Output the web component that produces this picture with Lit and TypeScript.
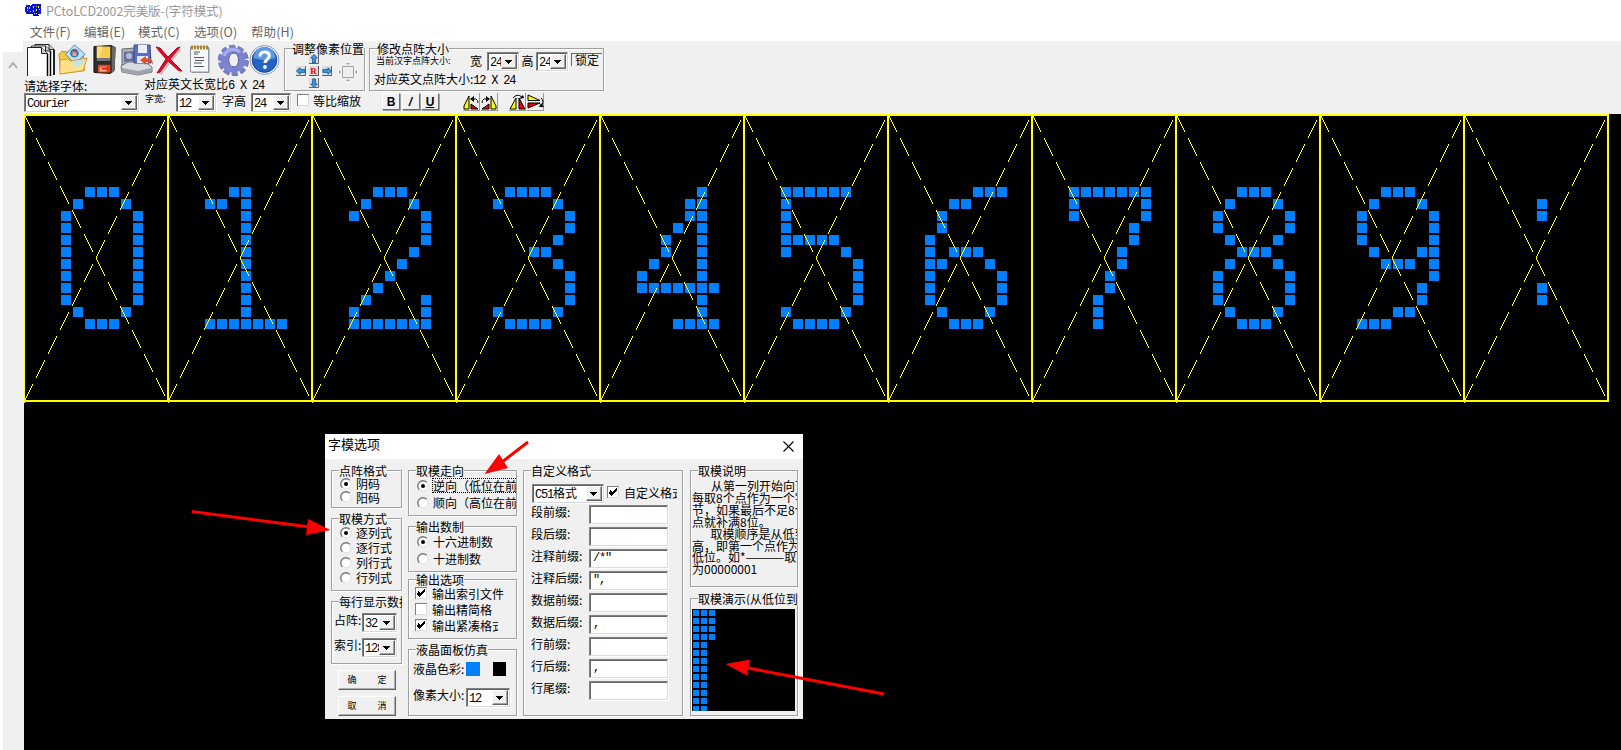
import { LitElement, html, css, svg, nothing } from "lit";
import { customElement, property } from "lit/decorators.js";
import { classMap } from "lit/directives/class-map.js";

const O = "#.....#";
const V = "......#";
const GLYPHS: string[][] = [
  ["..###..", ".#...#.", O, O, O, O, O, O, O, O, ".#...#.", "..###.."],
  ["..##...", "##.#...", "...#...", "...#...", "...#...", "...#...", "...#...", "...#...", "...#...", "...#...", "...#...", "#######"],
  ["..###..", ".#...#.", O, V, V, ".....#.", "....#..", "...#...", "..#....", ".#....#", O, "#######"],
  [".####..", "#....#.", V, V, ".....#.", "...##..", ".....#.", V, V, V, "#....#.", ".####.."],
  [".....#.", "....##.", "....##.", "...#.#.", "..#..#.", "..#..#.", ".#...#.", "#....#.", "#######", ".....#.", ".....#.", "...####"],
  ["######.", "#......", "#......", "#......", "#####..", "#....#.", V, V, V, V, "#....#.", ".####.."],
  ["....###", "..##...", ".#.....", ".#.....", "#......", "#.###..", "##...#.", O, O, O, ".#...#.", "..###.."],
  ["#######", O, O, ".....#.", ".....#.", "....#..", "....#..", "...#...", "...#...", "..#....", "..#....", "..#...."],
  ["..###..", ".#...#.", O, O, ".#...#.", "..###..", ".#...#.", O, O, O, ".#...#.", "..###.."],
  ["..###..", ".#...#.", O, O, O, ".#...##", "..###.#", V, ".....#.", ".....#.", "...##..", "###...."],
  ["", "...#...", "...#...", "", "", "", "", "", "...#...", "...#...", "", ""],
];

/** Dashed diagonals: 9 steps of 1x2 pixels drawn, 3 skipped. */
const DIAGONALS = (() => {
  let d = "";
  for (let j = 0; j < 144; j++) {
    if (j % 12 > 8) continue;
    d += `M${j} ${2 * j}h1v2h-1z`;
    d += `M${j} ${286 - 2 * j}h1v2h-1z`;
  }
  return d;
})();

@customElement("dot-cell")
class DotCell extends LitElement {
  @property({ attribute: false }) rows: string[] = [];
  static styles = css`
    :host { display: block; width: 144px; height: 288px; flex: none; }
    svg { display: block; overflow: visible; shape-rendering: crispEdges; }
    .dot { fill: #0080ff; }
    .line { fill: #ffff00; }
  `;
  render() {
    let d = "";
    this.rows.forEach((r, y) =>
      [...r].forEach((c, x) => {
        if (c === "#") d += `M${37 + 12 * x} ${73 + 12 * y}h10v10h-10z`;
      })
    );
    return html`<svg width="144" height="288" viewBox="0 0 144 288">
      <path class="dot" d=${d}></path>
      <path class="line" d=${DIAGONALS}></path>
      <path class="line" d="M0 0h145v2h-145zM0 286h145v2h-145zM0 0h1v289h-1zM143 0h2v288h-2z"></path>
    </svg>`;
  }
}

@customElement("drop-box")
class DropBox extends LitElement {
  @property() value = "";
  static styles = css`
    :host {
      display: flex; box-sizing: border-box; height: 19px; flex: none; background: #fff;
      border: 1px solid; border-color: #808080 #d8d8d8 #d8d8d8 #808080;
      box-shadow: inset 1px 1px #606060, 1px 1px #fff;
      padding: 2px 1px 0 1px; overflow: hidden;
    }
    .text {
      flex: 1; min-width: 0; overflow: hidden; white-space: pre; color: #000; line-height: 12px; height: 14px; margin-left: 1px;
      font-family: "Noto Sans CJK SC", sans-serif; font-size: 12px;
    }
    .latin { font-family: "Liberation Mono", monospace; letter-spacing: -1.2px; }
    .btn {
      width: 16px; height: 15px; margin-top: -1px; flex: none; box-sizing: border-box; background: #f0f0f0;
      border: 1px solid; border-color: #fff #606060 #606060 #fff; box-shadow: inset -1px -1px #a0a0a0;
    }
    svg { display: block; margin: 5px 0 0 3px; }
  `;
  render() {
    const m = /^([\x20-\x7e]*)(.*)$/.exec(this.value)!;
    return html`<span class="text"><span class="latin">${m[1]}</span>${m[2]}</span>
      <span class="btn"><svg width="7" height="4"><path shape-rendering="crispEdges" d="M0 0h7v1h-7zM1 1h5v1h-5zM2 2h3v1h-3zM3 3h1v1h-1z"/></svg></span>`;
  }
}

@customElement("group-box")
class GroupBox extends LitElement {
  @property() label = "";
  static styles = css`
    :host {
      display: flex; flex-direction: column; box-sizing: border-box; flex: none;
      border: 1px solid #a0a0a0; box-shadow: 1px 1px #fff, inset 1px 1px #fff;
      font-size: 12px; line-height: 12px; color: #000;
    }
    .legend {
      align-self: flex-start; margin: -7px 0 0 7px; height: 13px; line-height: 13px;
      background: #f0f0f0; white-space: nowrap; flex: none; max-width: calc(100% - 6px); overflow: hidden;
    }
    .body { margin-top: -1px; display: flex; flex-direction: column; min-width: 0; }
  `;
  render() {
    return html`<div class="legend">${this.label}</div><div class="body"><slot></slot></div>`;
  }
}

const radio = (text: string, on = false, focus = false) => html`<div class="opt">
  <svg class="mark" width="12" height="12" viewBox="0 0 12 12">
    <circle cx="6" cy="6" r="5" fill="#fff" stroke="#e0e0e0"/>
    <path d="M2.3 9.7A5.2 5.2 0 0 1 9.7 2.3" fill="none" stroke="#777" stroke-width="1.3"/>
    ${on ? svg`<circle cx="6" cy="6" r="2" fill="#000"/>` : nothing}
  </svg><span class=${classMap({ cap: true, focus })}>${text}</span></div>`;

const check = (text: string, on = false) => html`<div class="opt">
  <svg class="mark" width="12" height="12" viewBox="0 0 12 12" shape-rendering="crispEdges">
    <path fill="#fff" d="M0 0h12v12H0z"/><path fill="#808080" d="M0 0h12v1H1v11H0z"/><path fill="#dcdcdc" d="M11 1h1v11H1v-1h10z"/>
    ${on ? svg`<path d="M3 4h1v1h1v1h1v-1h1v-1h1v-1h1v-1h1v3h-1v1h-1v1h-1v1h-1v1h-1v1h-1v-1h-1v-1h-1z"/>` : nothing}
  </svg><span class="cap">${text}</span></div>`;

const icons = {
  logo: svg`<svg width="17" height="15" viewBox="0 0 17 15"><g shape-rendering="crispEdges"><path fill="#0818c8" d="M1 2h4v1h2V1h9v10h-3v2H8v-2H1V9H0V4h1z"/><path fill="#ffe020" d="M2 4h1v2H2zM4 4h1v2H4zM6 5h1v1H6zM8 3h1v2H8zM11 3h1v1h-1zM13 3h1v2h-1zM2 7h1v1H2zM5 8h1v1H5zM8 7h1v2H8zM11 6h1v2h-1zM14 6h1v1h-1zM9 10h1v1H9zM11 10h1v1h-1z"/><path fill="#101040" d="M6 2h1v9H6zM12 2h1v10h-1zM8 12h6v1H8z"/></g></svg>`,
  copy: svg`<svg width="30" height="32" viewBox="0 0 30 32"><g fill="#fff" stroke="#222"><path d="M8 30V.5h14l5 5V31"/><path d="M4.500 31V2h14l5 5v24"/><path d="M.5 32V3.500h14l6 6V32"/></g><path d="M14.500 3.500v6h6M18.500 2v5h5M22 .5v5h5" fill="#ccc" stroke="#222"/><path d="M20.500 10v22M23.500 7v25M27 6v25" stroke="#000" stroke-width="1.500"/></svg>`,
  open: svg`<svg width="32" height="32" viewBox="0 0 33 32"><path d="M2 10l3-3 7 1 2 3h13l1 4v12L4 30z" fill="#f5c84a" stroke="#b88a25"/><path d="M18 .5l11 9.500-11 10-9-10z" fill="#c3e4f2" stroke="#4e86a8"/><circle cx="18" cy="9" r="4.500" fill="#2f79b8"/><path d="M16 7h4v5h-4z" fill="#f2a08a"/><path d="M17 6h3v2h-3z" fill="#d33"/><path d="M3 30.500V16l8-1 3 2 17-3-4 13z" fill="#ffe08a" stroke="#c9992f"/><path d="M15 17l14-1-8 8z" fill="#b9e3f7"/></svg>`,
  floppy: svg`<svg width="24" height="31" viewBox="0 0 25 31"><path d="M1 2l18-1 4 2-1 24-4 3-17-1z" fill="#2b2b2b" stroke="#111"/><path d="M19.500 1.500l4 1.500-1 24-3 2.500z" fill="#6c6862"/><path d="M4 2h14v12H4z" fill="#f7ca52"/><path d="M4 2h6l-3 12H4z" fill="#fbdc80"/><path d="M4 14h14v3H4z" fill="#777"/><path d="M5 21h13v8H5z" fill="#e3401b"/><path d="M7 23h7v5H7z" fill="#ffb089"/><path d="M9 24h7v2H9z" fill="#c21"/></svg>`,
  save: svg`<svg width="34" height="32" viewBox="0 0 34 32"><path d="M2 5l13-1 5 3v13L2 21z" fill="#aeb2be" stroke="#667"/><path d="M4 8l10-1v10L4 18z" fill="#62719c"/><circle cx="9" cy="12" r="3" fill="#aeb9d9"/><path d="M1 22l7-4h17l7 5v5l-14 3L2 28z" fill="#dadbe0" stroke="#6d7078"/><path d="M2 24l16 3 13-3v4l-13 3-16-3z" fill="#a2a4ab"/><path d="M14 1h16l1 18H14z" fill="#5a6fc4" stroke="#3b4684"/><path d="M18 1h9v8h-9z" fill="#eef"/><path d="M17 12h11v7H17z" fill="#e5e8f5"/><path d="M20 16l6-4v2.500h2c4 0 5 3 5 6.500-1-3-3-3-7-3v3z" fill="#ee4a22"/></svg>`,
  cross: svg`<svg width="28" height="30" viewBox="0 0 28 30"><path d="M3 4L26 27M25 4L5 29" stroke="#c4bcbc" stroke-width="3"/><path d="M1 2l4 1 8 9 9-9 3-1-10 12 12 12-4-1-10-9-8 11-3 1 9-14z" fill="#d8102c" stroke="#c0001c"/></svg>`,
  notes: svg`<svg width="22" height="30" viewBox="0 0 22 30"><path d="M3 4h17.500v25H3z" fill="#999"/><path d="M1.500 3h18v25h-18z" fill="#f7f8fa" stroke="#8e959d"/><path d="M2 3.500h18" stroke="#a88626" stroke-width="4" stroke-dasharray="2 1"/><path d="M5 8h6M5 10h4M5 13.500h10M6 16.500h9M5 19h8M5 22.500h10" stroke="#505860"/></svg>`,
  gear: svg`<svg width="32" height="32" viewBox="-16 -16 32 32"><circle r="12.200" fill="none" stroke="#777" stroke-width="6" stroke-dasharray="5 2.665" transform="translate(.8 1)"/><circle r="12" fill="none" stroke="#7a80d0" stroke-width="6.500" stroke-dasharray="5 2.540"/><path fill-rule="evenodd" fill="#7c84d2" d="M0-12.500A12.500 12.500 0 0 1 0 12.500A12.500 12.500 0 0 1 0-12.500zM1-7C-6-7-6 7 1 7C7 7 7-7 1-7z"/><path d="M-9-4A10 10 0 0 1 7-8" fill="none" stroke="#a9b0ee" stroke-width="3"/><path d="M1-7C-6-7-6 7 1 7C7 7 7-7 1-7z" fill="#f0f0f0" stroke="#555a9c"/></svg>`,
  help: svg`<svg width="31" height="32" viewBox="0 0 31 32"><circle cx="15.500" cy="16" r="14.500" fill="#e8edf5" stroke="#8da0bd"/><circle cx="15.500" cy="16" r="12.300" fill="#2463c4" stroke="#164390"/><path d="M4.500 14a11 11 0 0 1 22 0q-11 4-22 0z" fill="#5e98e4"/><path d="M11 12.500q0-4.500 4.600-4.500t4.700 4c0 3.500-4.300 3.500-4.300 7" fill="none" stroke="#fff" stroke-width="3"/><circle cx="16" cy="23" r="1.900" fill="#fff"/></svg>`,
};

const arrow = (deg: number) => html`<svg class="arrow" width="10" height="10" viewBox="0 0 11 11"><path d="M0 0h11v11H0z" fill="#dcdcdc"/><path d="M10.500 0v10.500H0" fill="none" stroke="#555"/><g transform="rotate(${deg} 5.500 5.500)"><path d="M5.500 .5l3.500 4H7V10H4V4.500H2z" fill="#3aa0ee" stroke="#0e4796" stroke-width=".9"/></g></svg>`;

const flip = (kind: number) => {
  const art = [
    svg`<path d="M1 16V13L6 3v13z" fill="#ff0" stroke="#000"/><path d="M8 16v-5l7 5z" fill="#e00" stroke="#000"/><path d="M9 6h4q2 1 2 4" fill="none" stroke="#000"/><path d="M7 6l4-3v6z"/>`,
    svg`<path d="M10 16V3l5 10v3z" fill="#ff0" stroke="#000"/><path d="M1 16l7-5v5z" fill="#e00" stroke="#000"/><path d="M1 10q0-3 2-4h4" fill="none" stroke="#000"/><path d="M9 6L5 3v6z"/>`,
    svg`<path d="M1 16L7 5v11z" fill="#ff0" stroke="#000"/><path d="M10 16V5l6 11z" fill="#e00" stroke="#000"/><path d="M4 5q4-5 9-1" fill="none" stroke="#000"/><path d="M15 5l-5 1 4-4z"/>`,
    svg`<path d="M1 2l12 5.500H1z" fill="#ff0" stroke="#000"/><path d="M1 10h12L1 15z" fill="#e00" stroke="#000"/><path d="M14 5q4 4 0 8" fill="none" stroke="#000"/><path d="M12 14h5l-3-4z"/>`,
  ];
  return html`<span class="flip"><svg width="17" height="17" viewBox="0 0 17 17">${art[kind]}</svg></span>`;
};

const FIELDS: [string, string][] = [
  ["段前缀:", ""], ["段后缀:", ""], ["注释前缀:", '/*"'], ["注释后缀:", '",'], ["数据前缀:", ""],
  ["数据后缀:", ","], ["行前缀:", ""], ["行后缀:", ","], ["行尾缀:", ""],
];

@customElement("app-root")
class AppRoot extends LitElement {
  static styles = css`
    :host {
      display: flex; flex-direction: column; position: relative; width: 1621px; height: 750px; overflow: hidden;
      background: #fff; font-family: "Noto Sans CJK SC", sans-serif; font-size: 12px; line-height: 12px; color: #000;
    }
    svg { display: block; flex: none; }
    .title { display: flex; height: 22px; flex: none; padding: 3px 0 0 25px; box-sizing: border-box; color: #999; }
    .title span { margin: 2px 0 0 4px; font-size: 12.5px; letter-spacing: -0.1px; }
    .menu { display: grid; grid-template-columns: 54px 54px 56px 57px 60px; height: 19px; flex: none; padding: 4px 0 0 30px; box-sizing: border-box; color: #666; font-size: 12.5px; }
    .menu span { white-space: nowrap; letter-spacing: .1px; }
    .main { display: flex; flex: 1; min-height: 0; }
    .side { width: 20px; margin: 11px 0 0 3px; background: #f0f0f0; flex: none; padding: 9px 0 0 5px; box-sizing: border-box; }
    .work { flex: 1; min-width: 0; display: flex; flex-direction: column; background: #f0f0f0; padding-left: 1px; }
    .tools { height: 73px; flex: none; display: flex; flex-direction: column; }
    .upper { display: flex; height: 51px; flex: none; }
    .left { width: 260px; flex: none; }
    .icons { display: flex; align-items: flex-start; height: 37px; padding: 3px 0 0 3px; box-sizing: border-box; }
    .i-floppy { margin-left: 4px; } .i-save { margin-left: 3px; } .i-cross { margin: 1px 0 0 1px; }
    .i-notes { margin-left: 6px; } .i-gear { margin-left: 6px; }
    .labels { display: flex; height: 14px; white-space: pre; }
    .labels .l1 { width: 120px; padding-top: 2px; } .labels .l2 { height: 12px; }
    .mono { font-family: "Liberation Mono", monospace; font-size: 12px; letter-spacing: -1.2px; white-space: pre; }
    .row3 { display: flex; height: 20px; align-items: flex-start; white-space: nowrap; margin-top: 1px; }
    .tiny { font-size: 9px; line-height: 10px; white-space: pre; }
    .row3 .tiny { padding-top: 1px; }
    .t { padding-top: 2px; }
    .pos { width: 81px; height: 43px; margin-top: 7px; }
    .posbody { display: flex; margin: 0 0 0 11px; }
    .pad { display: grid; grid-template-columns: repeat(3, 10px); grid-template-rows: repeat(3, 10px); column-gap: 3px; row-gap: 2px; }
    .reset { background: #ddd; color: #e00; font: bold 9px/10px "Liberation Serif", serif; text-align: center; border-right: 1px solid #555; border-bottom: 1px solid #555; box-sizing: border-box; height: 10px; }
    .target { margin: 8px 0 0 6px; }
    .size { width: 235px; height: 43px; margin: 7px 0 0 4px; }
    .sizerow { display: flex; height: 18px; margin-top: -2px; }
    .sizerow .tiny { width: 94px; padding: 4px 0 0 6px; }
    .sizerow .cn { padding-top: 3px; width: 17px; }
    .lock { width: 31px; height: 13px; margin: 1px 0 0 3px; border-top: 1px solid #666; border-left: 1px solid #666; text-align: center; line-height: 12px; box-sizing: border-box; }
    .eng { padding: 3px 0 0 4px; white-space: nowrap; }
    .biu { display: flex; }
    .biu span { width: 18px; height: 17px; box-sizing: border-box; border: 1px solid; border-color: #fff #707070 #707070 #fff; box-shadow: 1px 1px #a0a0a0; margin-right: 1.5px; text-align: center; font: bold 12px/16px "Liberation Sans", sans-serif; }
    .biu .ital { font-style: italic; } .biu .under { text-decoration: underline; }
    .flip { width: 17px; height: 18px; margin-right: 1px; border-right: 1px solid #999; border-bottom: 1px solid #999; box-sizing: border-box; flex: none; }
    .canvas { flex: 1; background: #000; display: flex; align-items: flex-start; min-height: 0; }

    .opt { display: flex; align-items: center; height: 14px; white-space: nowrap; overflow: hidden; }
    .mark { margin-right: 4px; }
    .cap { line-height: 13px; height: 13px; }
    .focus { outline: 1px dotted #000; outline-offset: 0; }

    .dialog { position: absolute; left: 325px; top: 434px; width: 478px; height: 285px; background: #f0f0f0; display: flex; flex-direction: column; }
    .dtitle { height: 25px; flex: none; background: #fff; display: flex; justify-content: space-between; padding: 3px 9px 0 3px; box-sizing: border-box; font-size: 13px; line-height: 13px; }
    .dtitle svg { margin-top: 4px; }
    .dbody { display: flex; padding: 11px 0 0 6px; }
    .col { display: flex; flex-direction: column; flex: none; }
    .c1 { width: 71px; } .c2 { width: 109px; margin-left: 6px; } .c3 { margin-left: 6px; } .c4 { margin-left: 7px; }
    .g1 { height: 38px; } .g1 .opt { height: 13.5px; margin-left: 8px; }
    .g2 { height: 73px; margin-top: 10px; } .g2 .opt { height: 15px; margin-left: 8px; }
    .g1 .opt:first-of-type { margin-top: 1px; } .g2 .opt:first-of-type { margin-top: 1px; }
    .g3 { height: 63px; margin-top: 10px; }
    .pair { display: flex; height: 19px; } .pair .cn { padding-top: 1px; white-space: nowrap; flex: none; }
    .g3 .pair { margin: 5px 0 1px 2px; } .g3 .cn { width: 28px; }
    .g3 .pair:first-of-type { margin-top: 6px; }
    .push { width: 58px; height: 20px; margin: 6px 0 0 7px; box-sizing: border-box; border: 1px solid; border-color: #fff #606060 #606060 #fff; box-shadow: inset -1px -1px #b0b0b0; text-align: center; font-size: 9px; line-height: 18px; white-space: pre; word-spacing: 1px; }
    .g4 { height: 46px; } .g4 .opt { height: 17px; margin: 0 0 0 8px; } .g4 .opt:first-of-type { margin-top: 1px; }
    .g5 { height: 46px; margin-top: 10px; } .g5 .opt { height: 17px; margin-left: 8px; } .g5 .opt:first-of-type { margin-top: 1px; }
    .g6 { height: 60px; margin-top: 7px; } .g6 .opt { height: 16px; margin-left: 6px; width: 83px; } .g6 .opt:first-of-type { width: 100px; }
    .g6 .mark { margin-right: 5px; }
    .g7 { height: 67px; margin-top: 10px; } .g7 .pair { margin: 7px 0 0 4px; } .g7 .cn { width: 53px; }
    .swatch { width: 14px; height: 14px; background: #0080ff; } .swatch.off { background: #000; margin-left: 13px; width: 13px; }
    .g4 .mark, .g5 .mark { margin-right: 4px; }
    .g8 { width: 160px; height: 246px; }
    .fmt { display: flex; margin: 8px 0 0 8px; height: 21px; }
    .fmt .opt { margin: 1px 0 0 3px; width: 70px; } .fmt .mark { margin-right: 5px; }
    .fields { display: flex; flex-direction: column; gap: 2.8px; padding: 0 0 0 7px; }
    .field { display: flex; height: 19.2px; }
    .field label { width: 58px; padding-top: 1.4px; white-space: nowrap; }
    .entry { width: 79px; height: 19px; box-sizing: border-box; background: #fff; border: 1px solid; border-color: #808080 #dadada #dadada #808080; box-shadow: inset 1px 1px #686868, 1px 1px #fff; padding: 2px 0 0 3px; }
    .g9 { width: 108px; height: 117px; }
    .help { margin: 4px 0 0 1px; white-space: pre; overflow: hidden; line-height: 11.9px; }
    .para { padding-left: 18.5px; } .para.first { padding-left: 19px; }
    .dash { letter-spacing: -1.5px; margin-right: 1.5px; }
    .g10 { width: 108px; height: 118px; margin-top: 11px; }
    .demo { width: 103px; height: 102px; background: #000; margin: 5px 0 0 1px; overflow: hidden; }
    .marks { position: absolute; left: 0; top: 0; pointer-events: none; }
  `;

  render() {
    let demo = "";
    for (let r = 0; r < 13; r++) for (let c = 0; c < (r < 4 ? 3 : 2); c++) demo += `M${1 + 8 * c} ${1 + 8 * r}h6v6h-6z`;
    return html`
      <div class="title">${icons.logo}<span>PCtoLCD2002完美版-(字符模式)</span></div>
      <div class="menu"><span>文件(F)</span><span>编辑(E)</span><span>模式(C)</span><span>选项(O)</span><span>帮助(H)</span></div>
      <div class="main">
        <div class="side"><svg width="10" height="8"><path d="M1 7l4-5 4 5" fill="none" stroke="#aaa" stroke-width="1.800"/></svg></div>
        <div class="work">
          <div class="tools">
            <div class="upper">
              <div class="left">
                <div class="icons">
                  <span>${icons.copy}</span><span>${icons.open}</span><span class="i-floppy">${icons.floppy}</span><span class="i-save">${icons.save}</span>
                  <span class="i-cross">${icons.cross}</span><span class="i-notes">${icons.notes}</span><span class="i-gear">${icons.gear}</span><span>${icons.help}</span>
                </div>
                <div class="labels"><span class="l1">请选择字体:</span><span class="l2">对应英文长宽比<span class="mono">6 X 24</span></span></div>
              </div>
              <group-box class="pos" label="调整像素位置">
                <div class="posbody">
                  <div class="pad">
                    <span></span>${arrow(0)}<span></span>
                    ${arrow(270)}<span class="reset">R</span>${arrow(90)}
                    <span></span>${arrow(180)}<span></span>
                  </div>
                  <svg class="target" width="20" height="20" viewBox="0 0 20 20"><path d="M4.500 4.500h11v11h-11z" fill="none" stroke="#a0a0a0"/><path d="M8 1h4l-2 2zM8 19h4l-2-2zM1 8v4l2-2zM19 8v4l-2-2z" fill="#a0a0a0"/></svg>
                </div>
              </group-box>
              <group-box class="size" label="修改点阵大小">
                <div class="sizerow">
                  <span class="tiny">当前汉字点阵大小:</span>
                  <span class="cn">宽</span><drop-box style="width:32px" value="24"></drop-box>
                  <span class="cn">&thinsp;高</span><drop-box style="width:32px" value="24"></drop-box>
                  <span class="lock">锁定</span>
                </div>
                <div class="eng">对应英文点阵大小:<span class="mono">12 X 24</span></div>
              </group-box>
            </div>
            <div class="row3">
              <drop-box style="width:115px" value="Courier"></drop-box>
              <span class="tiny" style="width:37px;text-indent:6px">字宽:</span>
              <drop-box style="width:40px" value="12"></drop-box>
              <span class="t" style="width:35px;text-indent:6px">字高</span>
              <drop-box style="width:40px" value="24"></drop-box>
              <span style="width:91px;padding-left:6px;box-sizing:border-box">${check("等比缩放")}</span>
              <span class="biu"><span>B</span><span class="ital">/</span><span class="under">U</span></span>
              <span style="width:22px"></span>${flip(0)}${flip(1)}<span style="width:10px"></span>${flip(2)}${flip(3)}
            </div>
          </div>
          <div class="canvas">${GLYPHS.map((g) => html`<dot-cell .rows=${g}></dot-cell>`)}</div>
        </div>
      </div>

      <div class="dialog">
        <div class="dtitle"><span>字模选项</span><svg width="11" height="11"><path d="M.5 .5l10 10M10.500 .5l-10 10" stroke="#000" stroke-width="1.100"/></svg></div>
        <div class="dbody">
          <div class="col c1">
            <group-box class="g1" label="点阵格式">${radio("阴码", true)}${radio("阳码")}</group-box>
            <group-box class="g2" label="取模方式">${radio("逐列式", true)}${radio("逐行式")}${radio("列行式")}${radio("行列式")}</group-box>
            <group-box class="g3" label="每行显示数据">
              <div class="pair"><span class="cn">占阵:</span><drop-box style="width:35px" value="32"></drop-box></div>
              <div class="pair"><span class="cn">索引:</span><drop-box style="width:35px" value="128"></drop-box></div>
            </group-box>
            <div class="push">确       定</div>
            <div class="push">取       消</div>
          </div>
          <div class="col c2">
            <group-box class="g4" label="取模走向">${radio("逆向（低位在前）", true, true)}${radio("顺向（高位在前）")}</group-box>
            <group-box class="g5" label="输出数制">${radio("十六进制数", true)}${radio("十进制数")}</group-box>
            <group-box class="g6" label="输出选项">${check("输出索引文件", true)}${check("输出精简格")}${check("输出紧凑格式", true)}</group-box>
            <group-box class="g7" label="液晶面板仿真">
              <div class="pair"><span class="cn">液晶色彩:</span><span class="swatch"></span><span class="swatch off"></span></div>
              <div class="pair"><span class="cn">像素大小:</span><drop-box style="width:44px" value="12"></drop-box></div>
            </group-box>
          </div>
          <div class="col c3">
            <group-box class="g8" label="自定义格式">
              <div class="fmt"><drop-box style="width:72px" value="C51格式"></drop-box>${check("自定义格式", true)}</div>
              <div class="fields">${FIELDS.map(([l, v]) => html`<div class="field"><label>${l}</label><span class="entry mono">${v}</span></div>`)}</div>
            </group-box>
          </div>
          <div class="col c4">
            <group-box class="g9" label="取模说明">
              <div class="help"><div class="para first">从第一列开始向下</div><div>每取8个点作为一个字</div><div>节，如果最后不足8个</div><div>点就补满8位。</div><div class="para">取模顺序是从低到</div><div>高，即第一个点作为最</div><div>低位。如*<span class="dash">————</span>取</div><div>为00000001</div></div>
            </group-box>
            <group-box class="g10" label="取模演示(从低位到高位)">
              <div class="demo"><svg width="103" height="102"><path fill="#0080ff" d=${demo}></path></svg></div>
            </group-box>
          </div>
        </div>
      </div>

      <svg class="marks" width="1621" height="750" fill="#f00" stroke="#f00" stroke-width="3">
        <path d="M528 442L502 462M192 511.500L310 527M884 694L748 668"/>
        <path stroke="none" d="M484.500 474L499 454L508 468zM330.500 530L308 519L306 535zM725.500 664L750 659.500L747 675.500z"/>
      </svg>
    `;
  }
}
